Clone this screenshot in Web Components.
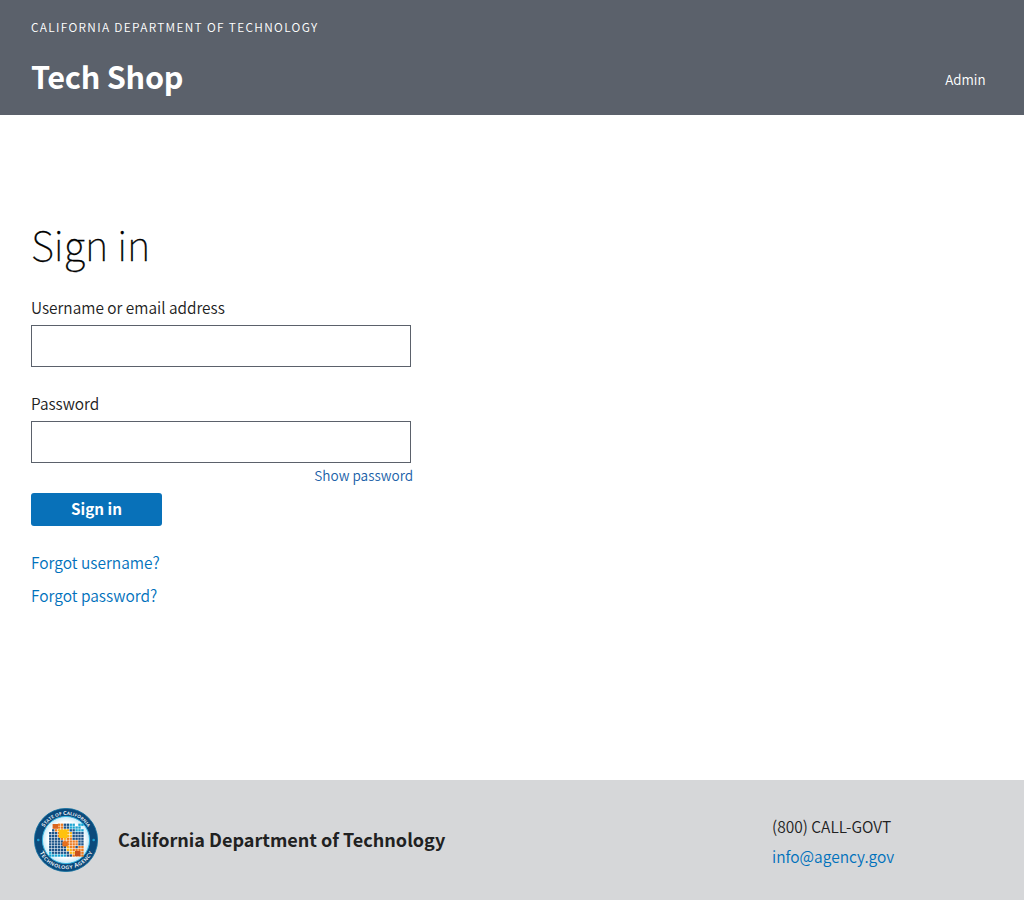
<!DOCTYPE html>
<html lang="en">
<head>
<meta charset="utf-8">
<title>Sign in</title>
<style>
html,body{margin:0;height:100%}
body{background:#fff;color:#212121;font-family:"Noto Sans CJK SC","Open Sans",sans-serif;font-size:15.4px;line-height:20px}
</style>
</head>
<body>
<sign-in-page></sign-in-page>
<script>
const define = (name, html) => customElements.define(name, class extends HTMLElement {
  constructor() {
    super();
    this.attachShadow({mode: 'open'}).innerHTML = html;
  }
});

/* Mosaic tiles: b navy, c cyan, o orange, y yellow */
const MOSAIC = [
  '...oobbcc.cc',
  '...oobbcccc.',
  '.boyyyybbccc',
  'bbboyyyybbbb',
  'bbbooyyybbbb',
  'bbbboyoobbbb',
  'bbbbbooooobb',
  'bbbbbboooobb',
  'bbbbbbyooboo',
  'bbbbbbyyoooo',
  'cbbbbbbyyooo',
  'ccccccbboooo'
];
const TILE = {b: '#1c5489', c: '#18a5d2', o: '#ec7a20', y: '#fbb51b'};
const tiles = MOSAIC.map((row, r) => [...row].map((k, c) => TILE[k]
  ? `<rect x="${15.1 + c * 2.92}" y="${15.6 + r * 2.8}" width="2.4" height="2.3" fill="${TILE[k]}"/>` : '').join('')).join('');

define('agency-seal', `
<style>
:host{display:block;width:64px;height:64px}
svg{display:block}
text{font-family:"Lato",sans-serif;font-weight:700;fill:#fff}
</style>
<svg width="64" height="64" viewBox="0 0 64 64" role="img" aria-label="Agency seal">
<defs>
<path id="top" d="M6.8 32a25.2 25.2 0 0 1 50.4 0"/>
<path id="bottom" d="M2.8 32a29.2 29.2 0 0 0 58.4 0"/>
<radialGradient id="sky"><stop offset=".75" stop-color="#fff"/><stop offset="1" stop-color="#c5e8f7"/></radialGradient>
</defs>
<circle cx="32" cy="32" r="31.6" fill="#0b4a7c" stroke="#0e6f9f" stroke-width=".8"/>
<circle cx="32" cy="32" r="23.6" fill="url(#sky)" stroke="#36b3df" stroke-width="1"/>
${tiles}
<rect x="18.6" y="16" width="5.4" height="4.8" fill="#d9641f"/><rect x="25" y="21.8" width="8.4" height="8.2" fill="#ffc20e"/><rect x="28.4" y="33.5" width="5.4" height="5" fill="#e8701e"/><rect x="41" y="43" width="5.4" height="5" fill="#c9501c"/>
<circle cx="4.3" cy="32" r="1.3" fill="#1c9ed0"/><circle cx="59.7" cy="32" r="1.3" fill="#1c9ed0"/>
<text font-size="5.3"><textPath href="#top" startOffset="50%" text-anchor="middle" textLength="52">S<tspan font-size="4.4">TATE OF </tspan>C<tspan font-size="4.4">ALIFORNIA</tspan></textPath></text>
<text font-size="5.9"><textPath href="#bottom" startOffset="50%" text-anchor="middle" textLength="66">T<tspan font-size="4.9">ECHNOLOGY </tspan>A<tspan font-size="4.9">GENCY</tspan></textPath></text>
</svg>`);

define('site-header', `
<style>
:host{display:block;box-sizing:border-box;height:115px;padding:18px 38.5px 0 31px;background:#5b616b;color:#fff}
.eyebrow{font-size:11.9px;line-height:18px;letter-spacing:1.32px;text-transform:uppercase;font-weight:350}
.row{display:flex;justify-content:space-between;margin-top:19px}
.name{font-size:30.6px;font-weight:700;line-height:42px;letter-spacing:-.25px;margin:0}
a{color:#fff;text-decoration:none;font-size:13.4px;line-height:20px;margin-top:14px;font-weight:350}
</style>
<div class="eyebrow"><slot name="department"></slot></div>
<div class="row"><h1 class="name"><slot name="name"></slot></h1><a><slot name="nav"></slot></a></div>`);

define('text-field', `
<style>
:host{display:block;width:380px}
label{display:block;height:20px;line-height:20px;margin-bottom:8px;white-space:nowrap;font-weight:350}
span{display:inline-block;transform:scaleY(1.05);transform-origin:0 82%}
input{display:block;box-sizing:border-box;width:380px;height:42px;border:1px solid #5b616b;border-radius:0;background:#fff;padding:0 8px;outline:0}
</style>
<label><span><slot></slot></span></label><input>`);

define('primary-button', `
<style>
:host{display:block}
button{display:block;width:131px;height:33px;padding:0 0 2px;border:0;border-radius:3px;background:#0871b9;color:#fff;font:700 15.25px/31px "Noto Sans CJK SC",sans-serif;text-align:center}
</style>
<button><slot></slot></button>`);

define('text-link', `
<style>
:host{display:block;height:20px;color:#0071bc;font-weight:350}
a{display:inline-block;color:inherit;text-decoration:none;transform:scaleY(1.05);transform-origin:0 82%}
</style>
<a><slot></slot></a>`);

define('sign-in-form', `
<style>
:host{display:block;padding:100px 31px 0}
h2{margin:0 0 24px;font-size:40.2px;font-weight:100;line-height:58px;color:#000;-webkit-text-stroke:.3px #000}
.second{margin-top:26px}
.show{width:382px;text-align:right;font-size:13.6px;line-height:20px;margin:2px 0 8px;color:#205fa8;font-weight:350}
.links{display:grid;gap:13px;margin-top:26px}
.links text-link{font-size:15.5px}
</style>
<h2>Sign in</h2>
<text-field>Username or email address</text-field>
<text-field class="second">Password</text-field>
<div class="show"><span>Show password</span></div>
<primary-button>Sign in</primary-button>
<div class="links"><text-link>Forgot username?</text-link><text-link>Forgot password?</text-link></div>`);

define('site-footer', `
<style>
:host{display:flex;box-sizing:border-box;height:120px;padding:0 31px 0 34px;align-items:center;background:#d6d7d9}
.title{font-size:18.05px;font-weight:700;line-height:24px;margin:-2px 0 0 20px;flex:1}
.contact{width:221px;display:grid;gap:10px;margin-top:2px;font-weight:350;font-size:15.5px}
.contact div{height:20px}
.contact span{display:inline-block;transform:scaleY(1.05);transform-origin:0 82%}
</style>
<agency-seal></agency-seal>
<div class="title"><span>California Department of Technology</span></div>
<div class="contact"><div><span>(800) CALL-GOVT</span></div><text-link>info@agency.gov</text-link></div>`);

define('sign-in-page', `
<style>
:host{display:flex;flex-direction:column;height:900px}
sign-in-form{flex:1}
</style>
<site-header><span slot="department">California Department of Technology</span><span slot="name">Tech Shop</span><span slot="nav">Admin</span></site-header>
<sign-in-form></sign-in-form>
<site-footer></site-footer>`);
</script>
</body>
</html>
